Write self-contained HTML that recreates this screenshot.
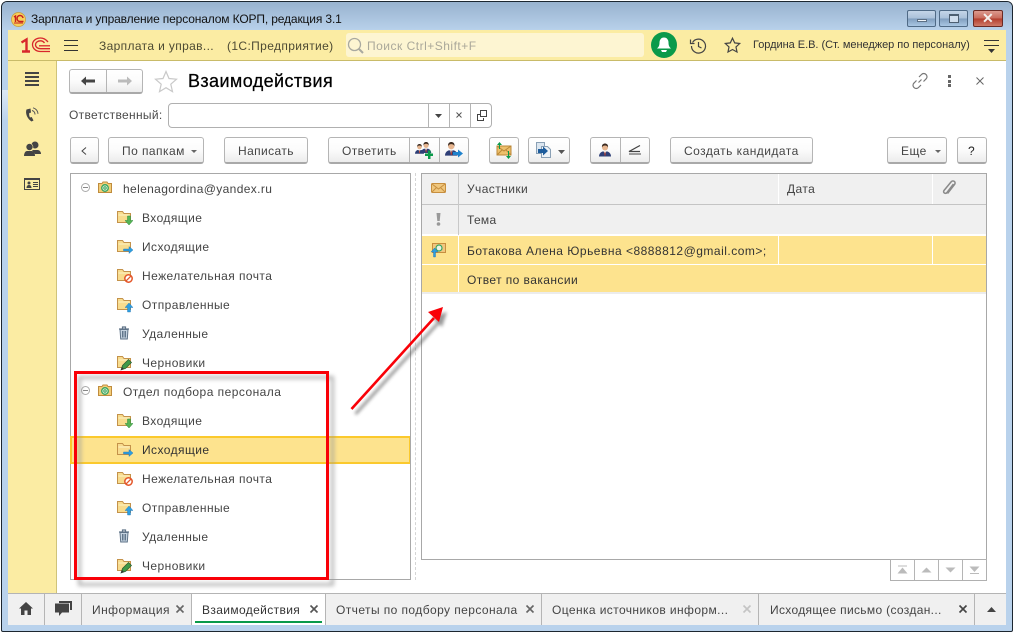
<!DOCTYPE html>
<html lang="ru"><head><meta charset="utf-8"><title>Взаимодействия</title>
<style>
html,body{margin:0;padding:0;background:#fff;}
#p{position:relative;width:1014px;height:633px;overflow:hidden;background:#fff;font-family:"Liberation Sans",sans-serif;font-size:12px;color:#4a4a4a;}
#p div,#p span.t{position:absolute;box-sizing:border-box;white-space:nowrap;}
.t{line-height:14px;}
.b{border:1px solid #b5b5b5;border-bottom:2px solid #a9a9a9;border-radius:3px;background:linear-gradient(#fff 0%,#fbfbfb 50%,#ececec 100%);}
.s{width:1px;background:#b5b5b5;}
svg{position:absolute;overflow:visible;}
.c{letter-spacing:.3px;color:#444;}
</style></head><body>
<div id="p">
<svg width="0" height="0" style="left:0;top:0">
<defs>
<g id="fd"><path d="M.5 12.5V1.5h5l1.500 2h6.500v9z" fill="#f8dc8e" stroke="#c4924a"/><path d="M1.500 5h11" stroke="#fdf2c4"/></g>
<g id="ml"><path d="M.5 11.500V2.500h3.500l1-1.500h4l1 1.500h3.500v9z" fill="#f3cd78" stroke="#bf8c3e"/><circle cx="7" cy="7" r="3.300" fill="#e4f0d8" stroke="#35a560" stroke-width="1.300"/><circle cx="7" cy="7" r="1.200" fill="none" stroke="#35a560"/></g>
<g id="tr"><path d="M1 3h10M4.500 2.500v-1.500h3v1.500" stroke="#5f7388" fill="none" stroke-width="1.200"/><path d="M2 3.500l.7 9.500h6.600l.7-9.500z" fill="#c5d3e0" stroke="#5f7388"/><path d="M4.500 5v6.500M6 5v6.500M7.500 5v6.500" stroke="#62778c"/></g>
<g id="i1"><use href="#fd"/><path d="M10.500 6v4.500H8l4 4.500 4-4.500h-2.500V6z" fill="#55b455" stroke="#2d8a38" stroke-width=".5"/></g>
<g id="i2"><use href="#fd"/><path d="M6.500 10h5.500V7.500l4 3.500-4 3.500V12H6.500z" fill="#2e9fe0" stroke="#2070b0" stroke-width=".4"/></g>
<g id="i3"><use href="#fd"/><circle cx="11.500" cy="10.500" r="3.700" fill="#fff" stroke="#e4572a" stroke-width="1.500"/><path d="M9 13l5-5" stroke="#e4572a" stroke-width="1.300"/></g>
<g id="i4"><use href="#fd"/><path d="M10.500 15v-4.500H8l4-4.500 4 4.500h-2.500V15z" fill="#2e9fe0" stroke="#2070b0" stroke-width=".4"/></g>
<g id="i6"><use href="#fd"/><path d="M4 15l1.500-4.500 6-6 3 3-6 6z" fill="#3f9a48" stroke="#2c5a30" stroke-width=".7"/><path d="M4 15l1-3 2 2z" fill="#333"/></g>
<g id="pr"><path d="M0 13c0-3 2-4.500 3.500-5h5c1.500.5 3.500 2 3.500 5z" fill="#2e3f77"/><path d="M4.800 8l1.200 4 1.200-4z" fill="#e8d6c8"/><path d="M5.700 8.500h.6l.4 3-.7 1-.7-1z" fill="#b53c2e"/><circle cx="6" cy="4" r="3" fill="#e6b58f"/><path d="M3 4c-.5-3 1.500-4 3-4s3.500 1 3 4c-.5-1.500-1.500-2-3-2s-2.500.5-3 2z" fill="#3b2a20"/></g>
</defs>
</svg>

<!-- window frame -->
<div style="left:1px;top:1px;width:1012px;height:631px;background:#b9d2ec;border:1px solid #1c2630;border-radius:6px 6px 2px 2px"></div>
<div style="left:2px;top:2px;width:1010px;height:28px;border-radius:5px 5px 0 0;background:linear-gradient(#98b2ce,#b8d1ea)"></div>
<div style="left:2px;top:90px;width:6px;height:30px;background:linear-gradient(#dce9f5,#bdd4ec)"></div>
<!-- white content area -->
<div style="left:57px;top:61px;width:949px;height:532px;background:#fff"></div>

<!-- title -->
<svg style="left:11px;top:12px" width="15" height="15" viewBox="0 0 15 15"><circle cx="7.500" cy="7.500" r="7" fill="#f7cf5a" stroke="#c79a35" stroke-width=".7"/><path d="M3 5l1.500-1v6" fill="none" stroke="#c8201c" stroke-width="1.400"/><path d="M12 6a3 3 0 1 0-3 3.500h3.500" fill="none" stroke="#c8201c" stroke-width="1.500"/><path d="M3 11h9" stroke="#c8201c"/></svg>
<span class="t" style="left:31px;top:12px;color:#111;letter-spacing:-.14px">Зарплата и управление персоналом КОРП, редакция 3.1</span>
<div style="left:907px;top:10px;width:29px;height:17px;border:1px solid #4f6a86;border-radius:2px;background:linear-gradient(#c4d5e8 0,#a9c0d9 50%,#7f9dbd 51%,#a9c6e3 100%)"><div style="left:9px;top:8px;width:10px;height:3px;background:#eef3f8;border:1px solid #5c6f84"></div></div>
<div style="left:939px;top:10px;width:29px;height:17px;border:1px solid #4f6a86;border-radius:2px;background:linear-gradient(#c4d5e8 0,#a9c0d9 50%,#7f9dbd 51%,#a9c6e3 100%)"><div style="left:9px;top:3px;width:10px;height:9px;border:1px solid #4d5f72;border-top-width:2px;background:#cfdded"></div></div>
<div style="left:973px;top:10px;width:30px;height:17px;border:1px solid #6b2a24;border-radius:2px;background:linear-gradient(#dc9a8e 0,#c8695a 50%,#b23c2c 51%,#cf7a68 100%)"><span class="t" style="left:8px;top:0;font-size:14px;font-weight:bold;color:#f4f1ee">✕</span></div>

<!-- top yellow bar -->
<div style="left:8px;top:30px;width:998px;height:31px;background:#fbeca3;border-bottom:1px solid #c9bb69"></div>
<svg style="left:20px;top:37px" width="31" height="16" viewBox="0 0 31 16"><path d="M1.500 5.500L6.500 2.500V14M2 14.500H10" fill="none" stroke="#d8262c" stroke-width="2.400"/><path d="M28 5C26 2.500 23.500 1 20.500 1C16 1 12.500 4 12.500 7.500C12.500 11.500 16 14.500 20.500 14.500H30" fill="none" stroke="#d8262c" stroke-width="1.300"/><path d="M24.500 6C23.500 4.500 22 3.800 20.500 3.800C18 3.800 15.500 5.300 15.500 7.800C15.500 10.300 18 11.700 20.500 11.700H30" fill="none" stroke="#d8262c" stroke-width="1.300"/><path d="M19 8.800H30" stroke="#d8262c" stroke-width="1.300"/></svg>
<div style="left:64px;top:40px;width:14px;height:1px;background:#333"></div>
<div style="left:64px;top:45px;width:14px;height:1px;background:#333"></div>
<div style="left:64px;top:50px;width:14px;height:1px;background:#333"></div>
<span class="t" style="left:99px;top:39px;color:#4d4a33;letter-spacing:.36px">Зарплата и управ...</span>
<span class="t" style="left:227px;top:39px;color:#4d4a33;letter-spacing:.37px">(1С:Предприятие)</span>
<div style="left:346px;top:33px;width:298px;height:24px;background:#fdf5d2;border-radius:3px"></div>
<svg style="left:347px;top:37px" width="18" height="17" viewBox="0 0 18 17"><circle cx="7.500" cy="7.500" r="6" fill="none" stroke="#a9a9a0" stroke-width="1.300"/><path d="M12 12l4 4" stroke="#a9a9a0" stroke-width="2"/></svg>
<span class="t" style="left:367px;top:39px;color:#aaa89a;letter-spacing:.5px">Поиск Ctrl+Shift+F</span>
<svg style="left:651px;top:32px" width="26" height="26" viewBox="0 0 26 26"><circle cx="13" cy="13" r="13" fill="#0a9a4a"/><path d="M13 5.500c-3 0-4.500 2.500-4.500 5 0 3-.8 4.500-2.500 6h14c-1.700-1.500-2.500-3-2.500-6 0-2.500-1.500-5-4.500-5z" fill="#fff"/><path d="M10 18h6l-1 2h-4z" fill="#fff"/></svg>
<svg style="left:690px;top:38px" width="17" height="16" viewBox="0 0 17 16"><path d="M2.500 4.500A7 7 0 1 1 1.500 8" fill="none" stroke="#444" stroke-width="1.200"/><path d="M.5 1.500v4h4" fill="none" stroke="#444" stroke-width="1.200"/><path d="M8.500 4v4.500l3 1.500" fill="none" stroke="#444" stroke-width="1.200"/></svg>
<svg style="left:724px;top:37px" width="17" height="16" viewBox="0 0 17 16"><path d="M8.500 1.200l2.200 4.700 5 .6-3.700 3.500 1 5-4.500-2.500-4.500 2.500 1-5L1.300 6.500l5-.6z" fill="none" stroke="#444" stroke-width="1.200"/></svg>
<span class="t" style="left:753px;top:38px;color:#333;font-size:11px;letter-spacing:-.03px">Гордина Е.В. (Ст. менеджер по персоналу)</span>
<div style="left:984px;top:40px;width:15px;height:1px;background:#333"></div>
<div style="left:984px;top:45px;width:15px;height:1px;background:#333"></div>
<svg style="left:988px;top:49px" width="7" height="4"><path d="M0 0h7L3.500 4z" fill="#333"/></svg>

<!-- side panel -->
<div style="left:8px;top:61px;width:49px;height:532px;background:#fbeca3;border-right:1px solid #cfc37a"></div>
<div style="left:25px;top:72px;width:14px;height:2px;background:#444"></div>
<div style="left:25px;top:76px;width:14px;height:2px;background:#444"></div>
<div style="left:25px;top:80px;width:14px;height:2px;background:#444"></div>
<div style="left:25px;top:84px;width:14px;height:2px;background:#444"></div>
<svg style="left:25px;top:107px" width="14" height="16" viewBox="0 0 14 16"><path d="M1.500 2.500c-1.500 4 1 9.500 5 12l2-1-1.800-3.500-1.700.5c-.8-1.500-1-3-.7-4.500l1.700-.4L5.500 1.500z" fill="#444"/><path d="M7 3.500a4 4 0 0 1 3 4M8 .8a6.500 6.500 0 0 1 5 6" fill="none" stroke="#555"/></svg>
<svg style="left:24px;top:141px" width="17" height="15" viewBox="0 0 17 15"><circle cx="11" cy="4" r="3.500" fill="#444"/><path d="M8 9h6c2 .5 3 2 3 4h-6z" fill="#444"/><circle cx="5.500" cy="6" r="3.500" fill="#444" stroke="#fbeca3" stroke-width=".6"/><path d="M0 15c0-3 1.500-5 3-5h5c1.500 0 3 2 3 5z" fill="#444"/></svg>
<svg style="left:24px;top:178px" width="16" height="12" viewBox="0 0 16 12"><rect x=".5" y=".5" width="15" height="11" fill="none" stroke="#444"/><rect x="0" y="0" width="16" height="2" fill="#444"/><circle cx="5" cy="5" r="1.500" fill="#444"/><path d="M2.500 10c0-2 1-3 2.500-3s2.500 1 2.500 3z" fill="#444"/><path d="M9 4.500h5M9 6.500h5M9 8.500h5" stroke="#444"/></svg>

<!-- form header -->
<div class="b" style="left:69px;top:69px;width:74px;height:25px"></div>
<div class="s" style="left:106px;top:70px;height:22px"></div>
<svg style="left:81px;top:76px" width="14" height="10"><path d="M0 5l5-4.500v3h9v3H5v3z" fill="#444"/></svg>
<svg style="left:118px;top:76px" width="14" height="10"><path d="M14 5L9 .5v3H0v3h9v3z" fill="#bbb"/></svg>
<svg style="left:154px;top:70px" width="24" height="23" viewBox="0 0 24 23"><path d="M12 1.500l3 7 7.500.7-5.700 5 1.700 7.400L12 17.700l-6.500 3.900 1.700-7.400-5.700-5L9 8.500z" fill="#fff" stroke="#c9c9c9" stroke-width="1.200"/></svg>
<span class="t" style="left:188px;top:71px;height:22px;line-height:21px;font-size:18px;color:#000;letter-spacing:.4px;-webkit-text-stroke:.25px #000">Взаимодействия</span>
<svg style="left:911px;top:72px" width="18" height="18" viewBox="0 0 18 18"><path d="M7.500 10.500l3-3M8 5l2.500-2.500a3 3 0 0 1 4.500 0 3 3 0 0 1 0 4.500L12.500 9.500M10 13l-2.500 2.500a3 3 0 0 1-4.500 0 3 3 0 0 1 0-4.500L5.500 8.500" fill="none" stroke="#777" stroke-width="1.200"/></svg>
<div style="left:948px;top:75px;width:3px;height:3px;background:#666"></div>
<div style="left:948px;top:80px;width:3px;height:3px;background:#666"></div>
<div style="left:948px;top:84px;width:3px;height:3px;background:#666"></div>
<svg style="left:976px;top:77px" width="8" height="8"><path d="M.5.5l7 7M7.500.5l-7 7" stroke="#666"/></svg>

<span class="t" style="left:69px;top:108px;letter-spacing:.32px;color:#4a4a4a">Ответственный:</span>
<div style="left:168px;top:103px;width:324px;height:25px;border:1px solid #b0b0b0;border-radius:4px;background:#fff"></div>
<div class="s" style="left:428px;top:104px;height:23px"></div>
<div class="s" style="left:449px;top:104px;height:23px"></div>
<div class="s" style="left:470px;top:104px;height:23px"></div>
<svg style="left:435px;top:114px" width="7" height="4"><path d="M0 0h7L3.500 4z" fill="#444"/></svg>
<svg style="left:456px;top:112px" width="7" height="7"><path d="M.5.500l5 5M5.500.5l-5 5" stroke="#555"/></svg>
<svg style="left:477px;top:110px" width="11" height="11"><path d="M3 4.500H.5v6h6V8M3.500.5h6v6h-6z" fill="none" stroke="#444"/></svg>

<!-- toolbar -->
<div class="b" style="left:70px;top:137px;width:29px;height:27px"></div>
<svg style="left:81px;top:147px" width="6" height="8"><path d="M5 .5L1 4l4 3.500" fill="none" stroke="#444"/></svg>
<div class="b" style="left:108px;top:137px;width:96px;height:27px"></div>
<span class="t c" style="left:122px;top:144px;letter-spacing:.45px">По папкам</span>
<svg style="left:191px;top:150px" width="6" height="3"><path d="M0 0h6L3 3z" fill="#666"/></svg>
<div class="b" style="left:224px;top:137px;width:84px;height:27px"></div>
<span class="t c" style="left:238px;top:144px;letter-spacing:.4px">Написать</span>
<div class="b" style="left:328px;top:137px;width:141px;height:27px"></div>
<div class="s" style="left:409px;top:138px;height:24px"></div>
<div class="s" style="left:439px;top:138px;height:24px"></div>
<span class="t c" style="left:342px;top:144px;letter-spacing:.42px">Ответить</span>
<svg style="left:415px;top:142px" width="18" height="17" viewBox="0 0 18 17"><g transform="translate(0,2) scale(.75)"><use href="#pr"/></g><g transform="translate(6,0) scale(.85)"><use href="#pr"/></g><path d="M10 11.500h3v-3h2.500v3h2.500v2.500h-2.500v3H13v-3h-3z" fill="#0a9a4a"/></svg>
<svg style="left:445px;top:142px" width="18" height="16" viewBox="0 0 18 16"><g transform="scale(1.050)"><use href="#pr"/></g><path d="M8 10h5V7.500l5 4-5 4V13H8z" fill="#1f82cc"/></svg>
<div class="b" style="left:489px;top:137px;width:30px;height:27px"></div>
<svg style="left:496px;top:142px" width="17" height="17" viewBox="0 0 17 17"><rect x="1" y="4" width="14" height="9" fill="#edc06c" stroke="#bb8838"/><path d="M1 4l7 5 7-5M1 13l5-5M15 13l-5-5" fill="none" stroke="#bb8838"/><path d="M3 7V3H1l2.500-3L6 3H4v4z" fill="#0a9a4a"/><path d="M12 9v5h-2l2.500 3 2.500-3h-2V9z" fill="#0a9a4a"/></svg>
<div class="b" style="left:528px;top:137px;width:42px;height:27px"></div>
<svg style="left:536px;top:142px" width="16" height="16" viewBox="0 0 16 16"><path d="M.5.500h8v11h-8z" fill="#dbe6f0" stroke="#8aa0b5"/><path d="M5.500 4.500h6l3 3v8h-9z" fill="#eef3f8" stroke="#8aa0b5"/><path d="M2 7h5V4.500L12 9l-5 4.500V11H2z" fill="#1d5c9c"/></svg>
<svg style="left:558px;top:150px" width="7" height="4"><path d="M0 0h7L3.500 4z" fill="#555"/></svg>
<div class="b" style="left:590px;top:137px;width:60px;height:27px"></div>
<div class="s" style="left:620px;top:138px;height:24px"></div>
<svg style="left:599px;top:143px" width="12" height="15" viewBox="0 0 12 14"><use href="#pr"/></svg>
<svg style="left:628px;top:145px" width="14" height="10"><path d="M12 .5L1 6.500H12" fill="none" stroke="#444" stroke-width="1.200"/><path d="M1 9h12" stroke="#444"/></svg>
<div class="b" style="left:670px;top:137px;width:143px;height:27px"></div>
<span class="t c" style="left:684px;top:144px;letter-spacing:.46px">Создать кандидата</span>
<div class="b" style="left:887px;top:137px;width:60px;height:27px"></div>
<span class="t c" style="left:901px;top:144px;letter-spacing:.45px">Еще</span>
<svg style="left:935px;top:150px" width="6" height="3"><path d="M0 0h6L3 3z" fill="#666"/></svg>
<div class="b" style="left:957px;top:137px;width:30px;height:27px"></div>
<span class="t" style="left:968px;top:144px;color:#222">?</span>

<!-- tree -->
<div style="left:70px;top:173px;width:341px;height:407px;border:1px solid #a8a8a8;background:#fff"></div>
<div style="left:70px;top:436px;width:340px;height:28px;background:#fde38e;border:2px solid #fbc92c;border-right-width:1px"></div>

<svg style="left:81px;top:183px" width="9" height="9"><circle cx="4.500" cy="4.500" r="4" fill="#fff" stroke="#aaa"/><path d="M2 4.500h5" stroke="#888"/></svg>
<svg style="left:98px;top:181px" width="15" height="13"><use href="#ml"/></svg>
<span class="t c" style="left:123px;top:182px;letter-spacing:.36px">helenagordina@yandex.ru</span>
<svg style="left:117px;top:210px" width="16" height="15"><use href="#i1"/></svg>
<span class="t c" style="left:142px;top:211px;letter-spacing:.43px">Входящие</span>
<svg style="left:117px;top:239px" width="16" height="15"><use href="#i2"/></svg>
<span class="t c" style="left:142px;top:240px;letter-spacing:.43px">Исходящие</span>
<svg style="left:117px;top:268px" width="16" height="15"><use href="#i3"/></svg>
<span class="t c" style="left:142px;top:269px;letter-spacing:.43px">Нежелательная почта</span>
<svg style="left:117px;top:297px" width="16" height="15"><use href="#i4"/></svg>
<span class="t c" style="left:142px;top:298px;letter-spacing:.43px">Отправленные</span>
<svg style="left:118px;top:326px" width="12" height="14"><use href="#tr"/></svg>
<span class="t c" style="left:142px;top:327px;letter-spacing:.43px">Удаленные</span>
<svg style="left:117px;top:355px" width="16" height="15"><use href="#i6"/></svg>
<span class="t c" style="left:142px;top:356px;letter-spacing:.43px">Черновики</span>

<svg style="left:81px;top:386px" width="9" height="9"><circle cx="4.500" cy="4.500" r="4" fill="#fff" stroke="#aaa"/><path d="M2 4.500h5" stroke="#888"/></svg>
<svg style="left:98px;top:384px" width="15" height="13"><use href="#ml"/></svg>
<span class="t c" style="left:123px;top:385px;letter-spacing:.46px">Отдел подбора персонала</span>
<svg style="left:117px;top:413px" width="16" height="15"><use href="#i1"/></svg>
<span class="t c" style="left:142px;top:414px;letter-spacing:.43px">Входящие</span>
<svg style="left:117px;top:442px" width="16" height="15"><use href="#i2"/></svg>
<span class="t" style="left:142px;top:443px;letter-spacing:.43px;color:#333">Исходящие</span>
<svg style="left:117px;top:471px" width="16" height="15"><use href="#i3"/></svg>
<span class="t c" style="left:142px;top:472px;letter-spacing:.43px">Нежелательная почта</span>
<svg style="left:117px;top:500px" width="16" height="15"><use href="#i4"/></svg>
<span class="t c" style="left:142px;top:501px;letter-spacing:.43px">Отправленные</span>
<svg style="left:118px;top:529px" width="12" height="14"><use href="#tr"/></svg>
<span class="t c" style="left:142px;top:530px;letter-spacing:.43px">Удаленные</span>
<svg style="left:117px;top:558px" width="16" height="15"><use href="#i6"/></svg>
<span class="t c" style="left:142px;top:559px;letter-spacing:.43px">Черновики</span>

<!-- splitter -->
<div style="left:415px;top:173px;width:1px;height:407px;border-left:1px dashed #d5d5d5"></div>

<!-- table -->
<div style="left:421px;top:173px;width:566px;height:387px;border:1px solid #a8a8a8;background:#fff"></div>
<div style="left:422px;top:174px;width:564px;height:61px;background:#f0f0f0"></div>
<div style="left:422px;top:204px;width:564px;height:1px;background:#c4c4c4"></div>
<div style="left:422px;top:234px;width:564px;height:2px;background:#fff"></div>
<div style="left:458px;top:174px;width:1px;height:61px;background:#c8c8c8"></div>
<div style="left:778px;top:174px;width:1px;height:30px;background:#fff"></div>
<div style="left:932px;top:174px;width:1px;height:30px;background:#fff"></div>
<div style="left:422px;top:236px;width:564px;height:56px;background:#fde38e"></div>
<div style="left:422px;top:264px;width:564px;height:1px;background:#fff"></div>
<div style="left:458px;top:236px;width:1px;height:56px;background:#fff"></div>
<div style="left:778px;top:236px;width:1px;height:28px;background:#fff"></div>
<div style="left:932px;top:236px;width:1px;height:28px;background:#fff"></div>
<div style="left:422px;top:292px;width:564px;height:2px;background:#ececec"></div>
<svg style="left:431px;top:183px" width="15" height="10" viewBox="0 0 15 10"><rect x=".5" y=".5" width="14" height="9" rx="1" fill="#f0c77e" stroke="#c78f3f"/><path d="M1 1l6.500 5L14 1M1 9l4.500-4.500M14 9L9.500 4.500" fill="none" stroke="#c78f3f"/></svg>
<svg style="left:436px;top:213px" width="5" height="13"><path d="M.5 0h4l-.8 8H1.300z" fill="#999"/><circle cx="2.500" cy="11" r="1.800" fill="#999"/></svg>
<svg style="left:942px;top:180px" width="14" height="16" viewBox="0 0 14 16"><path d="M12 4L5.500 12.500c-1.500 2-4.500 0-3-2L9.500 2c2-2.500 5.500 0 3.500 2.500L6 13.500" fill="none" stroke="#8a8a8a" stroke-width="1.500" transform="translate(-.5,0)"/></svg>
<span class="t c" style="left:467px;top:182px;letter-spacing:.42px">Участники</span>
<span class="t c" style="left:787px;top:182px;letter-spacing:.4px">Дата</span>
<span class="t c" style="left:467px;top:213px;letter-spacing:.3px">Тема</span>
<span class="t" style="left:467px;top:244px;letter-spacing:.49px;color:#333">Ботакова Алена Юрьевна &lt;8888812@gmail.com&gt;;</span>
<span class="t" style="left:467px;top:273px;letter-spacing:.43px;color:#333">Ответ по вакансии</span>
<svg style="left:430px;top:243px" width="16" height="15" viewBox="0 0 16 15"><rect x="2.500" y=".5" width="13" height="9" fill="#f0c77e" stroke="#c78f3f"/><circle cx="9" cy="5" r="3" fill="#e9f3e6" stroke="#35a560" stroke-width="1.200"/><path d="M3.500 14V9H1l3.500-4L8 9H5.500v5z" fill="#2e9fe0" stroke="#2070b0" stroke-width=".4"/></svg>

<!-- table nav -->
<div style="left:890px;top:559px;width:97px;height:22px;border:1px solid #b0b0b0;background:#fff"></div>
<div class="s" style="left:914px;top:560px;height:20px"></div>
<div class="s" style="left:938px;top:560px;height:20px"></div>
<div class="s" style="left:962px;top:560px;height:20px"></div>
<svg style="left:897px;top:566px" width="11" height="8"><path d="M1 0h9" stroke="#bbb"/><path d="M.5 7.500L5.500 1.500l5 6z" fill="#bbb"/></svg>
<svg style="left:921px;top:567px" width="11" height="6"><path d="M.5 5.500L5.500.5l5 5z" fill="#bbb"/></svg>
<svg style="left:945px;top:567px" width="11" height="6"><path d="M.5.500L5.500 5.500l5-5z" fill="#bbb"/></svg>
<svg style="left:969px;top:566px" width="11" height="8"><path d="M.5.500L5.500 6l5-5.500z" fill="#bbb"/><path d="M1 7.500h9" stroke="#bbb"/></svg>

<!-- red annotations -->
<div style="left:78px;top:376px;width:256px;height:210px;border:3px solid #9a9a9a;filter:blur(2px);opacity:.75"></div>
<div style="left:74px;top:371px;width:255px;height:209px;border:3px solid #f90007"></div>
<svg style="left:340px;top:295px" width="115" height="125" viewBox="0 0 115 125">
<defs><filter id="bl" x="-30%" y="-30%" width="160%" height="160%"><feGaussianBlur stdDeviation="1.500"/></filter></defs>
<g filter="url(#bl)" opacity=".6" transform="translate(4,5)"><path d="M11.500 114L95 22" stroke="#555" stroke-width="3"/><path d="M103 12l-15 5 10 10z" fill="#555"/></g>
<path d="M11.500 114L94 23" stroke="#f90007" stroke-width="2.600"/>
<path d="M103 12L88 17l11 10z" fill="#f90007"/>
</svg>

<!-- tabs -->
<div style="left:8px;top:593px;width:998px;height:32px;background:#f0f0f0;border-top:1px solid #b4b4b4"></div>
<div style="left:192px;top:594px;width:133px;height:31px;background:#fff"></div>
<div style="left:195px;top:621px;width:127px;height:2px;background:#0a9a4a"></div>
<div class="s" style="left:44px;top:594px;height:31px"></div>
<div class="s" style="left:81px;top:594px;height:31px"></div>
<div class="s" style="left:191px;top:594px;height:31px"></div>
<div class="s" style="left:325px;top:594px;height:31px"></div>
<div class="s" style="left:541px;top:594px;height:31px"></div>
<div class="s" style="left:758px;top:594px;height:31px"></div>
<div class="s" style="left:974px;top:594px;height:31px"></div>
<svg style="left:19px;top:602px" width="14" height="13" viewBox="0 0 14 13"><path d="M7 0L0 6.500h2V13h3.500V8.500h3V13H12V6.500h2z" fill="#444"/></svg>
<svg style="left:54px;top:601px" width="18" height="16" viewBox="0 0 18 16"><path d="M5 0h13v9h-2V2H5z" fill="#444"/><path d="M1 2.500h14v9H8l-3 3.500v-3.500H1z" fill="#444"/></svg>
<span class="t" style="left:92px;top:603px;color:#444;letter-spacing:.45px">Информация</span>
<span class="t" style="left:202px;top:603px;color:#333;letter-spacing:.37px">Взаимодействия</span>
<span class="t" style="left:336px;top:603px;color:#444;letter-spacing:.42px">Отчеты по подбору персонала</span>
<span class="t" style="left:552px;top:603px;color:#444;letter-spacing:.4px">Оценка источников информ...</span>
<span class="t" style="left:770px;top:603px;color:#444;letter-spacing:.33px">Исходящее письмо (создан...</span>
<svg style="left:176px;top:605px" width="8" height="8"><path d="M.5.500l7 7M7.500.5l-7 7" stroke="#666" stroke-width="1.600"/></svg>
<svg style="left:310px;top:605px" width="8" height="8"><path d="M.5.500l7 7M7.500.5l-7 7" stroke="#555" stroke-width="1.600"/></svg>
<svg style="left:526px;top:605px" width="8" height="8"><path d="M.5.500l7 7M7.500.5l-7 7" stroke="#666" stroke-width="1.600"/></svg>
<svg style="left:743px;top:605px" width="8" height="8"><path d="M.5.500l7 7M7.500.5l-7 7" stroke="#c4c4c4" stroke-width="1.600"/></svg>
<svg style="left:959px;top:605px" width="8" height="8"><path d="M.5.500l7 7M7.500.5l-7 7" stroke="#444" stroke-width="1.600"/></svg>
<svg style="left:987px;top:607px" width="9" height="5"><path d="M0 5l4.500-5L9 5z" fill="#444"/></svg>
</div>
</body></html>
